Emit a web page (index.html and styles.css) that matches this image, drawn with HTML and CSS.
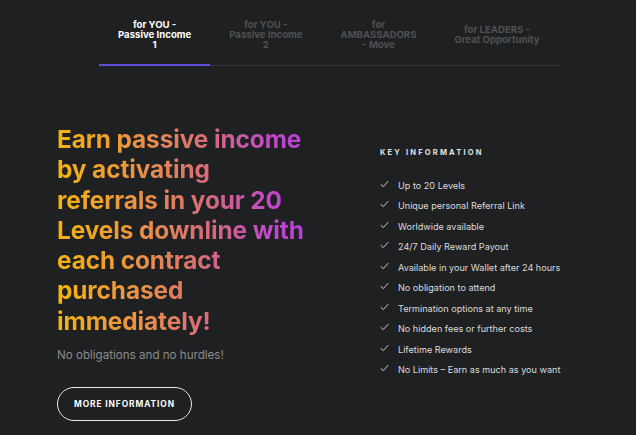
FILE: index.html
```html
<!DOCTYPE html>
<html lang="en">
<head>
    <meta charset="UTF-8">
    <title>Passive Income</title>
    <meta name="viewport" content="width=device-width, initial-scale=1.0">
    <link rel="stylesheet" href="styles.css">
</head>
<body>
    <div class="tabs">
        <div class="tab active">for YOU -<br>Passive Income<br>1</div>
        <div class="tab">for YOU -<br>Passive Income<br>2</div>
        <div class="tab">for<br>AMBASSADORS<br>- Move</div>
        <div class="tab">for LEADERS -<br>Great Opportunity</div>
    </div>

    <div class="hero">
        <div class="hero-left">
            <h1 class="headline">Earn passive income<br>by activating<br>referrals in your 20<br>Levels downline with<br>each contract<br>purchased<br>immediately!</h1>
            <p class="sub">No obligations and no hurdles!</p>
            <a class="btn" href="#">MORE INFORMATION</a>
        </div>
        <div class="hero-right">
            <h2 class="key-title">KEY INFORMATION</h2>
            <ul class="checklist">
                <li><svg viewBox="0 0 10 8"><path d="M0.8 4.2 L3.6 6.9 L9.2 0.8"/></svg>Up to 20 Levels</li>
                <li><svg viewBox="0 0 10 8"><path d="M0.8 4.2 L3.6 6.9 L9.2 0.8"/></svg>Unique personal Referral Link</li>
                <li><svg viewBox="0 0 10 8"><path d="M0.8 4.2 L3.6 6.9 L9.2 0.8"/></svg>Worldwide available</li>
                <li><svg viewBox="0 0 10 8"><path d="M0.8 4.2 L3.6 6.9 L9.2 0.8"/></svg>24/7 Daily Reward Payout</li>
                <li><svg viewBox="0 0 10 8"><path d="M0.8 4.2 L3.6 6.9 L9.2 0.8"/></svg>Available in your Wallet after 24 hours</li>
                <li><svg viewBox="0 0 10 8"><path d="M0.8 4.2 L3.6 6.9 L9.2 0.8"/></svg>No obligation to attend</li>
                <li><svg viewBox="0 0 10 8"><path d="M0.8 4.2 L3.6 6.9 L9.2 0.8"/></svg>Termination options at any time</li>
                <li><svg viewBox="0 0 10 8"><path d="M0.8 4.2 L3.6 6.9 L9.2 0.8"/></svg>No hidden fees or further costs</li>
                <li><svg viewBox="0 0 10 8"><path d="M0.8 4.2 L3.6 6.9 L9.2 0.8"/></svg>Lifetime Rewards</li>
                <li><svg viewBox="0 0 10 8"><path d="M0.8 4.2 L3.6 6.9 L9.2 0.8"/></svg>No Limits – Earn as much as you want</li>
            </ul>
        </div>
    </div>
</body>
</html>
```

FILE: styles.css
```css
body {
    margin: 0;
    padding: 0;
    background: #1f2022;
    color: #fff;
    font-family: Inter, "DejaVu Sans", sans-serif;
    overflow: hidden;
}

/* tab bar */
.tabs {
    display: flex;
    width: 461px;
    margin-left: 99px;
    border-bottom: 1px solid #38393b;
}
.tab {
    padding: 20px 19px 14px;
    min-height: 30px;
    display: flex;
    align-items: center;
    text-align: center;
    font-size: 9.6px;
    font-weight: 700;
    line-height: 10px;
    color: #4f5052;
    border-bottom: 2px solid transparent;
    margin-bottom: -1px;
    white-space: nowrap;
}
.tab.active {
    color: #fff;
    border-bottom-color: #5c50dc;
}

/* hero */
.hero {
    display: grid;
    grid-template-columns: 323px 1fr;
    padding-top: 58px;
}
.hero-left {
    padding-left: 57px;
}
.headline {
    margin: 0;
    width: 256px;
    font-size: 24.4px;
    font-weight: 700;
    line-height: 30.3px;
    letter-spacing: -0.1px;
    background: linear-gradient(90deg, #f5b40e 0%, #e98e4a 35%, #d6697c 60%, #c34bc6 82%, #b43bdc 100%);
    -webkit-background-clip: text;
    background-clip: text;
    color: transparent;
}
.sub {
    margin: 12px 0 0;
    font-size: 11.6px;
    color: #8b8c8e;
}
.btn {
    display: inline-block;
    margin-top: 25px;
    padding: 11px 16px;
    border: 1.5px solid #e8e8e8;
    border-radius: 20px;
    color: #fff;
    text-decoration: none;
    font-size: 8.4px;
    font-weight: 700;
    letter-spacing: 0.9px;
}

.hero-right {
    padding-left: 57px;
    padding-top: 24px;
}
.key-title {
    margin: 0 0 18px;
    font-size: 7.5px;
    font-weight: 700;
    letter-spacing: 2.2px;
    color: #e0e0e0;
}
.checklist {
    list-style: none;
    margin: 0;
    padding: 0;
}
.checklist li {
    display: flex;
    align-items: center;
    height: 20.5px;
    font-size: 9.1px;
    color: #dcdcdc;
}
.checklist svg {
    width: 9px;
    height: 8px;
    margin-right: 9px;
    margin-top: -3px;
    fill: none;
    stroke: #e0e0e0;
    stroke-width: 1;
}
```
